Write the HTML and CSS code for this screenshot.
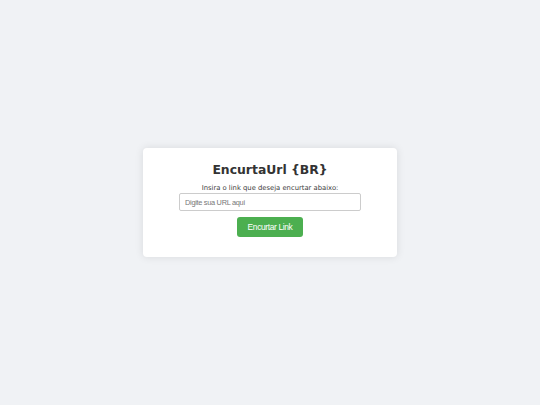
FILE: index.html
```html
<!DOCTYPE html>
<html>
<head>
<meta name="viewport" content="width=device-width, initial-scale=1">
<link rel="stylesheet" href="styles.css">
<title>EncurtaUrl {BR}</title>
</head>
<body>

<div class="container">
    <h1>EncurtaUrl {BR}</h1>
    <label for="urlInput" class="label_class">Insira o link que deseja encurtar abaixo:</label>
    <input type="text" id="urlInput" placeholder="Digite sua URL aqui" spellcheck="false">
    <button class="short-button">Encurtar Link</button>
</div>

</body>
</html>
```

FILE: styles.css
```css
body {
    margin: 0;
    height: 405px;
    background-color: #f0f2f5;
    display: flex;
    justify-content: center;
    align-items: center;
    font-family: "DejaVu Sans", sans-serif;
}

.container {
    width: 254px;
    box-sizing: border-box;
    background-color: white;
    border-radius: 4px;
    box-shadow: 0 0 8px rgba(0, 0, 0, 0.1);
    padding: 14px 36px 20px;
    display: flex;
    flex-direction: column;
    align-items: center;
    text-align: center;
}

h1 {
    margin: 0 0 7px;
    font-size: 12.4px;
    line-height: 15px;
    font-weight: bold;
    color: #333333;
}

.label_class {
    font-size: 6.8px;
    line-height: 9px;
    color: #3c3c3c;
}

input {
    width: 100%;
    height: 18px;
    box-sizing: border-box;
    margin-top: 0;
    padding: 0 5px;
    border: 1px solid #cccccc;
    border-radius: 2px;
    font-family: "Liberation Sans", Arial, sans-serif;
    font-size: 7.4px;
    letter-spacing: -0.3px;
    color: #333333;
}

input::placeholder {
    color: #777777;
}

.short-button {
    margin-top: 6px;
    width: 66px;
    height: 20px;
    padding: 0;
    white-space: nowrap;
    border: none;
    border-radius: 3px;
    background-color: #4caf50;
    color: white;
    font-family: "Liberation Sans", Arial, sans-serif;
    font-size: 8.4px;
    letter-spacing: -0.35px;
}
```
